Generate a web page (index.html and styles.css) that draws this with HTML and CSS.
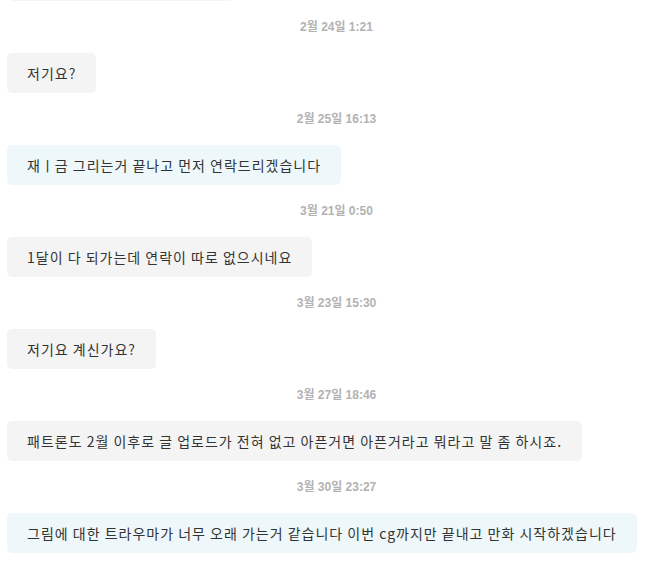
FILE: index.html
```html
<!DOCTYPE html>
<html lang="ko">
<head>
<meta charset="utf-8">
<link rel="stylesheet" href="styles.css">
</head>
<body>
<div class="chat">
  <div class="row"><div class="bubble gray prev" aria-hidden="true"></div></div>

  <div class="time">2월 24일 1:21</div>
  <div class="row"><div class="bubble gray">저기요?</div></div>

  <div class="time">2월 25일 16:13</div>
  <div class="row"><div class="bubble blue">재ㅣ금 그리는거 끝나고 먼저 연락드리겠습니다</div></div>

  <div class="time">3월 21일 0:50</div>
  <div class="row"><div class="bubble gray">1달이 다 되가는데 연락이 따로 없으시네요</div></div>

  <div class="time">3월 23일 15:30</div>
  <div class="row"><div class="bubble gray">저기요 계신가요?</div></div>

  <div class="time">3월 27일 18:46</div>
  <div class="row"><div class="bubble gray">패트론도 2월 이후로 글 업로드가 전혀 없고 아픈거면 아픈거라고 뭐라고 말 좀 하시죠.</div></div>

  <div class="time">3월 30일 23:27</div>
  <div class="row"><div class="bubble blue">그림에 대한 트라우마가 너무 오래 가는거 같습니다 이번 cg까지만 끝내고 만화 시작하겠습니다</div></div>
</div>
</body>
</html>
```
FILE: styles.css
```css
html, body {
  margin: 0;
  padding: 0;
  background: #ffffff;
  overflow: hidden;
}
body {
  font-family: "Noto Sans CJK KR", "Noto Sans", sans-serif;
  color: #333333;
}
.chat {
  display: flex;
  flex-direction: column;
  padding: 0 7px;
  margin-top: -39px;
}
.row {
  display: flex;
}
.bubble {
  font-size: 14px;
  letter-spacing: 1px;
  word-spacing: -0.8px;
  line-height: 20px;
  padding: 10px 20px;
  border-radius: 5px;
  white-space: nowrap;
}
.gray { background: #f4f4f4; }
.blue { background: #eef7fa; }
.prev {
  margin-left: 2px;
  width: 185px;
  height: 20px;
}
.time {
  font-family: "Liberation Sans", "Noto Sans CJK KR", Arial, sans-serif;
  font-size: 12px;
  font-weight: bold;
  line-height: 14px;
  color: #b2b2b2;
  text-align: center;
  padding-left: 24px;
  margin: 19px 0 19px;
}
```
